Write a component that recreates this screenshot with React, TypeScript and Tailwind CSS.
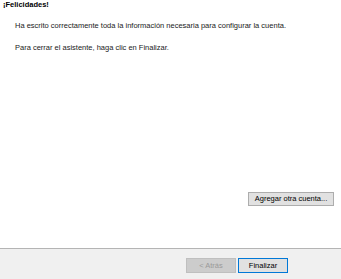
export default function App() {
    const font = { fontFamily: '"Liberation Sans", Arial, sans-serif' };

    return (
        <div className="w-[341px] h-[279px] flex flex-col bg-white text-black overflow-hidden" style={font}>
            {/* Content */}
            <div className="h-[248px] flex flex-col">
                <h1 className="pl-[3px] text-[7.5px] leading-[10px] font-bold">¡Felicidades!</h1>
                <p className="mt-[11px] pl-[15px] text-[7.5px] leading-[10px] text-[#1a1a1a]">
                    Ha escrito correctamente toda la información necesaria para configurar la cuenta.
                </p>
                <p className="mt-[12px] pl-[15px] text-[7.5px] leading-[10px] text-[#1a1a1a]">
                    Para cerrar el asistente, haga clic en Finalizar.
                </p>
                <div className="mt-[139px] flex justify-end pr-[7px]">
                    <button className="w-[86px] h-[14px] bg-[#e1e1e1] border border-[#adadad] text-[7.5px] leading-none text-black">
                        Agregar otra cuenta...
                    </button>
                </div>
            </div>

            {/* Footer */}
            <div className="flex-1 border-t border-[#b4b4b4] bg-[#f0f0f0] flex justify-end items-start pt-[9px] pr-[53px] gap-[2px]">
                <button
                    disabled
                    className="w-[50px] h-[15px] bg-[#cccccc] border border-[#bfbfbf] text-[7.5px] leading-none text-[#9a9a9a]"
                >
                    &lt; Atrás
                </button>
                <button className="w-[50px] h-[15px] bg-[#e1e1e1] border-[1.5px] border-[#0078d7] text-[7.5px] leading-none text-black">
                    Finalizar
                </button>
            </div>
        </div>
    );
}
